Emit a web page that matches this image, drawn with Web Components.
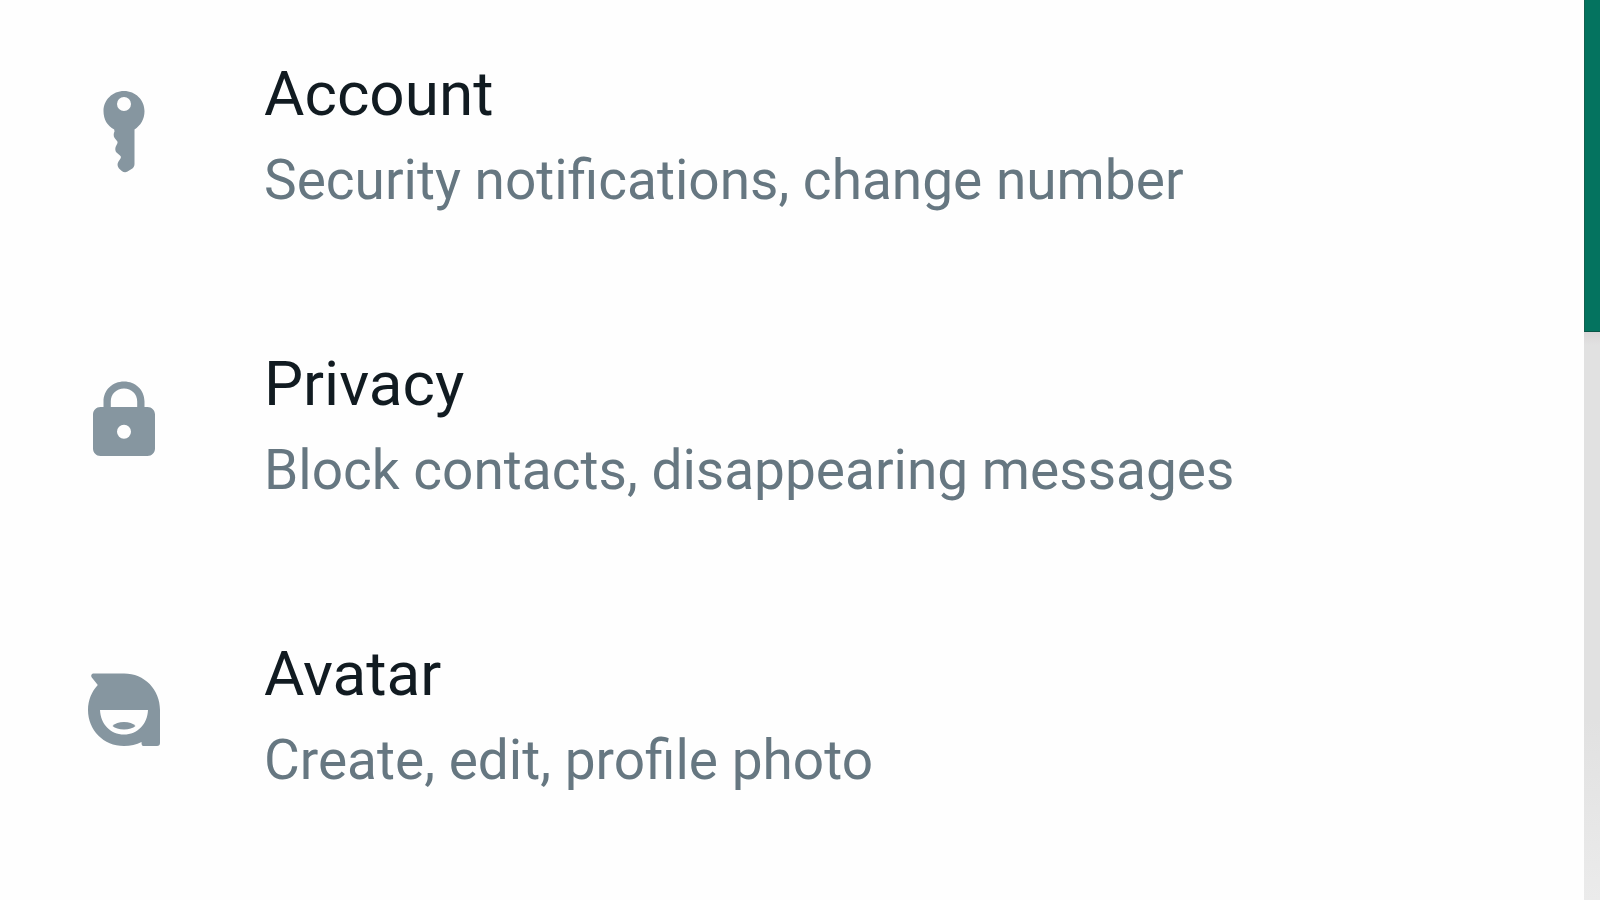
<!DOCTYPE html>
<html lang="en">
<head>
<meta charset="utf-8">
<title>Settings</title>
<style>
  body { margin: 0; background: #fefefe; font-family: Roboto, "Noto Sans", sans-serif; }
</style>
</head>
<body>
<settings-page>
  <settings-item icon="key" href="#account">
    <span slot="title">Account</span>
    <span slot="summary">Security notifications, change number</span>
  </settings-item>
  <settings-item icon="lock" href="#privacy">
    <span slot="title">Privacy</span>
    <span slot="summary">Block contacts, disappearing messages</span>
  </settings-item>
  <settings-item icon="avatar" href="#avatar">
    <span slot="title">Avatar</span>
    <span slot="summary">Create, edit, profile photo</span>
  </settings-item>
</settings-page>

<script>
const ICONS = {
  key: `<path fill-rule="evenodd" d="M44 11C55.500 11 64.500 20 64.500 31C64.500 39.500 60.500 45.500 54.500 49.500V84C54.500 86.200 53.500 87.700 52 88.800L47.500 91.600C45.500 92.600 43.500 92.300 41.800 91L39 88.500C37.300 86.500 37 83.500 38.500 81.500L40.500 78.500C41.200 77.300 41 76.500 40 75.600L36.500 72.500C35 70.800 35 68.500 35.800 66.500L37.300 63.500C37.800 62.300 37.500 61.500 36.800 60.700L34.600 58C33.300 56 33.500 53.500 34.500 51.500L34.200 49.500C27.500 46 23.500 39.500 23.500 31C23.500 20 32.500 11 44 11ZM44 17A7 7 0 1 0 44 31A7 7 0 1 0 44 17Z"/>`,
  lock: `<path fill-rule="evenodd" d="M23.500 37V31.500C23.500 20 32.500 11.500 44 11.500S64.500 20 64.500 31.500V37H67.500C71.700 37 75 40.300 75 44.500V78.500C75 82.700 71.700 86 67.500 86H20.500C16.300 86 13 82.700 13 78.500V44.500C13 40.300 16.300 37 20.500 37ZM30.800 37H57.200V31.500C57.200 24 51.500 18.500 44 18.500S30.800 24 30.800 31.500ZM44 54.800A7 7 0 1 0 44 68.800A7 7 0 1 0 44 54.800Z"/>`,
  avatar: `<path fill-rule="evenodd" d="M14 13.500H44C64.500 13.500 80 29.500 80 50V83C80 85 79 86 77 86H63.500C62 86 61.500 85 61.500 82C56.500 84.700 50.500 86 44 86C23.500 86 8 70 8 50C8 40 12 31 17.800 25L11.800 17.500C10.500 15.500 11.500 13.500 14 13.500ZM20 50C20.500 64 30.500 74.500 44 74.500S67.500 64 68 50Z"/><path d="M32.500 66C35 63.500 39 62 44 62S53 63.500 55.500 66C53 68.300 49 69.500 44 69.500S35 68.300 32.500 66Z"/>`
};

class SettingsItem extends HTMLElement {
  connectedCallback() {
    const root = this.attachShadow({ mode: "open" });
    root.innerHTML = `
      <style>
        :host { display: block; }
        a {
          display: grid;
          grid-template-columns: 90px 1fr;
          column-gap: 94px;
          align-items: center;
          padding: 58px 80px 78px;
          color: inherit;
          text-decoration: none;
        }
        svg { display: block; width: 90px; height: 110px; fill: #8696a0; }
        .text { display: grid; row-gap: 18px; }
        .title { font-size: 62px; line-height: 72px; color: #111b21; }
        .summary { font-size: 55px; line-height: 64px; color: #667781; }
      </style>
      <a>
        <svg viewBox="0 0 90 110" aria-hidden="true">${ICONS[this.getAttribute("icon")]}</svg>
        <div class="text">
          <div class="title"><slot name="title"></slot></div>
          <div class="summary"><slot name="summary"></slot></div>
        </div>
      </a>`;
    root.querySelector("a").setAttribute("href", this.getAttribute("href"));
  }
}

class SettingsPage extends HTMLElement {
  connectedCallback() {
    const root = this.attachShadow({ mode: "open" });
    root.innerHTML = `
      <style>
        :host { display: grid; grid-template-columns: minmax(0, 1fr) 16px; height: 100vh; overflow: hidden; }
        .edge { display: flex; flex-direction: column; background: linear-gradient(#d9d6d8 332px, #e1e1e1 345px, #e1e1e1 80%, #ebebeb); }
        .bar { height: 332px; box-sizing: border-box; background: #04735f; border-left: 1px solid #13614f; border-bottom: 1px solid #0a5547; }
      </style>
      <main><slot></slot></main>
      <div class="edge"><div class="bar"></div></div>`;
  }
}

customElements.define("settings-item", SettingsItem);
customElements.define("settings-page", SettingsPage);
</script>
</body>
</html>
